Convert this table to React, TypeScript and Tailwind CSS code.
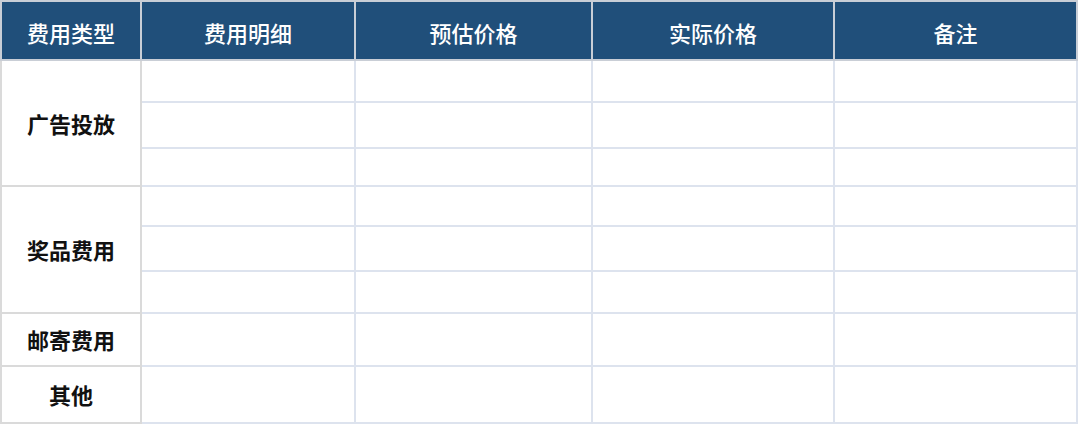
const COLS = ["费用类型", "费用明细", "预估价格", "实际价格", "备注"];

type Group = { label: string; heights: number[] };

const GROUPS: Group[] = [
  { label: "广告投放", heights: [42, 46, 38] },
  { label: "奖品费用", heights: [40, 45, 42] },
  { label: "邮寄费用", heights: [53] },
  { label: "其他", heights: [57] },
];

const WIDTHS = ["w-[140px]", "w-[214px]", "w-[237px]", "w-[242px]", "w-[243px]"];

export default function App() {
  return (
    <div className="w-[1080px] h-[425px] bg-white overflow-hidden" style={{ fontFamily: '"Noto Sans CJK SC", "Noto Sans", sans-serif' }}>
      <table className="table-fixed border-collapse w-[1077px] border-2 border-[#d6d6d6]">
        <colgroup>
          {WIDTHS.map((w, i) => (
            <col key={i} className={w} />
          ))}
        </colgroup>
        <thead>
          <tr className="h-[59px] bg-[#204f7a]">
            {COLS.map((c) => (
              <th key={c} className="border-2 border-[#c9ced6] text-white text-[22px] font-medium text-center leading-none pt-[2px]">
                {c}
              </th>
            ))}
          </tr>
        </thead>
        <tbody>
          {GROUPS.map((g) =>
            g.heights.map((h, i) => (
              <tr key={`${g.label}-${i}`} style={{ height: h }}>
                {i === 0 && (
                  <td rowSpan={g.heights.length} className="border-2 border-[#dadada] text-center text-[22px] font-semibold text-[#111]">
                    {g.label}
                  </td>
                )}
                {[0, 1, 2, 3].map((k) => (
                  <td key={k} className="border-2 border-[#dde3ee]" />
                ))}
              </tr>
            ))
          )}
        </tbody>
      </table>
    </div>
  );
}
